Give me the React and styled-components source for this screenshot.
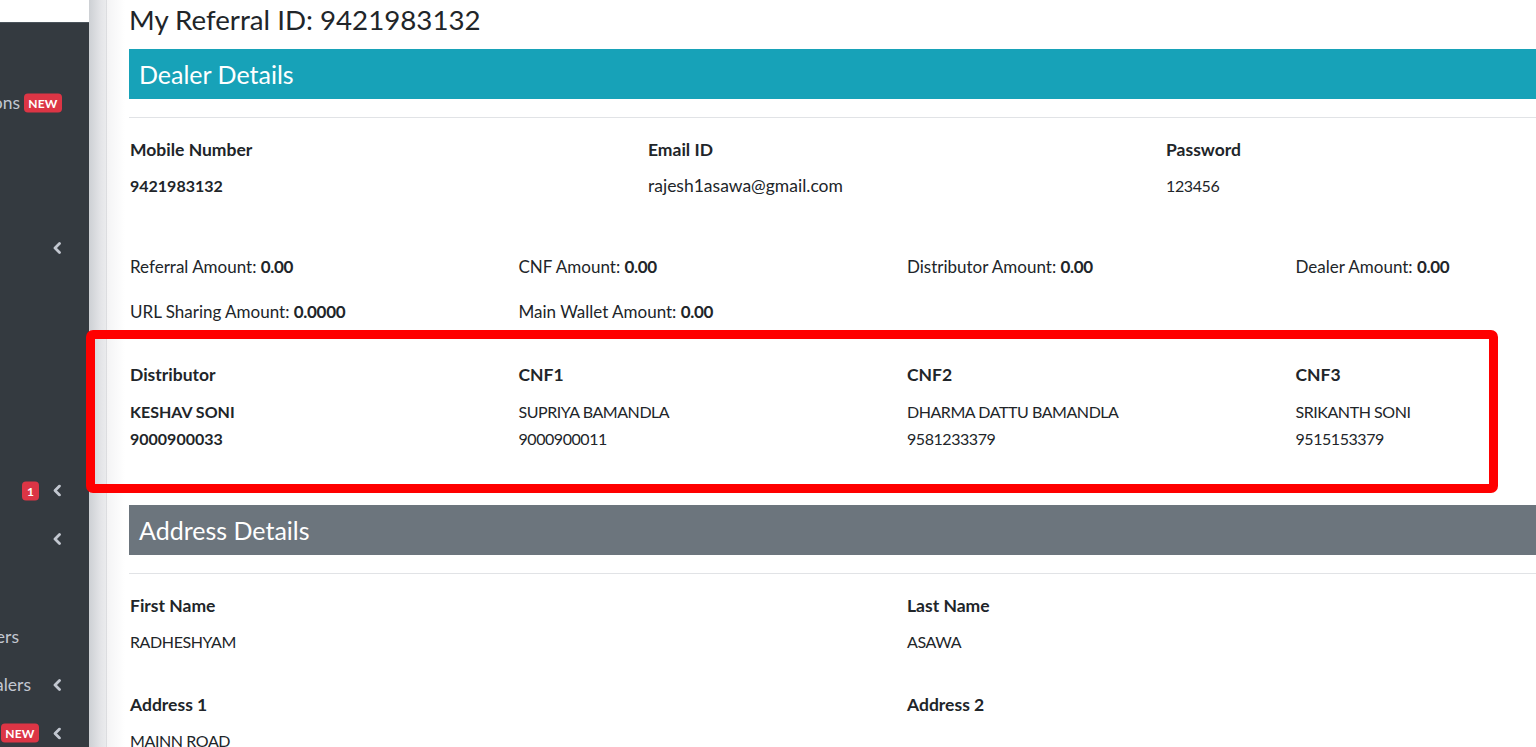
import React from 'react';
import styled, { createGlobalStyle } from 'styled-components';

const GlobalStyle = createGlobalStyle`
  html, body {
    margin: 0;
    padding: 0;
    height: 100%;
    overflow: hidden;
    background: #ffffff;
  }
  body {
    font-family: Lato, "Noto Sans", "Liberation Sans", sans-serif;
    font-size: 17.5px;
    color: #212529;
  }
`;

// the menu is scrolled sideways, so only the tail of a few labels shows
const navItems = [
  { id: 'notifications', label: 'Notifications', reach: 20, badge: 'NEW' },
  { id: 'blank-1' },
  { id: 'blank-2' },
  { id: 'reports', arrow: true },
  { id: 'blank-3' },
  { id: 'blank-4' },
  { id: 'blank-5' },
  { id: 'blank-6' },
  { id: 'tickets', badge: '1', arrow: true },
  { id: 'payouts', arrow: true },
  { id: 'blank-7' },
  { id: 'retailers', label: 'All Retailers', reach: 19 },
  { id: 'dealers', label: 'Manage Dealers', reach: 31, arrow: true },
  { id: 'referral', badge: 'NEW', arrow: true },
];

const distributorInfo = [
  { title: 'Distributor', name: 'KESHAV SONI', phone: '9000900033', strong: true },
  { title: 'CNF1', name: 'SUPRIYA BAMANDLA', phone: '9000900011' },
  { title: 'CNF2', name: 'DHARMA DATTU BAMANDLA', phone: '9581233379' },
  { title: 'CNF3', name: 'SRIKANTH SONI', phone: '9515153379' },
];

const Chevron = () => (
  <svg width="10" height="12" viewBox="0 0 10 12">
    <path d="M7.5 1.5 L3 6 L7.5 10.5" fill="none" stroke="#c2c7d0" strokeWidth="2.8" strokeLinecap="round" strokeLinejoin="round" />
  </svg>
);

function App() {
  return (
    <>
      <GlobalStyle />
      <Layout>
        <Sidebar>
          <Brand />
          <Nav>
            {navItems.map((item) => (
              <NavItem key={item.id}>
                {item.label && <NavText reach={item.reach}>{item.label}</NavText>}
                <NavRight>
                  {item.badge && <Badge wide={item.badge.length > 1}>{item.badge}</Badge>}
                  {item.arrow && <Chevron />}
                </NavRight>
              </NavItem>
            ))}
          </Nav>
        </Sidebar>
        <Gutter />
        <Main>
          <Title>My Referral ID: 9421983132</Title>
          <SectionBar color="#17a2b8">Dealer Details</SectionBar>
          <Divider />

          <Grid cols="518px 518px 518px">
            <Field>
              <Label>Mobile Number</Label>
              <Value bold>9421983132</Value>
            </Field>
            <Field>
              <Label>Email ID</Label>
              <Value plain>rajesh1asawa@gmail.com</Value>
            </Field>
            <Field>
              <Label>Password</Label>
              <Value>123456</Value>
            </Field>
          </Grid>

          <Grid cols="388.5px 388.5px 388.5px 388.5px" top={57} rowGap={21}>
            <Amount>Referral Amount: <b>0.00</b></Amount>
            <Amount>CNF Amount: <b>0.00</b></Amount>
            <Amount>Distributor Amount: <b>0.00</b></Amount>
            <Amount>Dealer Amount: <b>0.00</b></Amount>
            <Amount>URL Sharing Amount: <b>0.0000</b></Amount>
            <Amount>Main Wallet Amount: <b>0.00</b></Amount>
          </Grid>

          <Grid cols="388.5px 388.5px 388.5px 388.5px" top={39}>
            {distributorInfo.map((d) => (
              <Field key={d.title}>
                <Label gap={10.5}>{d.title}</Label>
                <Contact bold={d.strong}>{d.name}</Contact>
                <Contact bold={d.strong}>{d.phone}</Contact>
              </Field>
            ))}
          </Grid>

          <SectionBar color="#6c757d" top={53.5}>Address Details</SectionBar>
          <Divider />

          <Grid cols="777px 777px" rowGap={39}>
            <Field>
              <Label>First Name</Label>
              <Value>RADHESHYAM</Value>
            </Field>
            <Field>
              <Label>Last Name</Label>
              <Value>ASAWA</Value>
            </Field>
            <Field>
              <Label>Address 1</Label>
              <Value>MAINN ROAD</Value>
            </Field>
            <Field>
              <Label>Address 2</Label>
              <Value></Value>
            </Field>
          </Grid>
        </Main>
        <Highlight />
      </Layout>
    </>
  );
}

const Layout = styled.div`
  position: relative;
  display: flex;
  height: 747px;
  width: 1536px;
  overflow: hidden;
`;

const Sidebar = styled.aside`
  flex: 0 0 89px;
  background: #343a40;
  overflow: hidden;
  display: flex;
  flex-direction: column;
`;

const Brand = styled.div`
  height: 22px;
  background: #ffffff;
  border-bottom: 1px solid #4b545c;
  flex: none;
`;

const Nav = styled.nav`
  width: 89px;
  padding-top: 55.5px;
`;

const NavItem = styled.div`
  position: relative;
  height: 48.5px;
  display: flex;
  align-items: center;
  justify-content: flex-end;
  color: #c2c7d0;
  font-size: 17.5px;
  white-space: nowrap;
`;

const NavText = styled.span`
  flex: none;
  margin-right: ${(p) => 89 - p.reach}px;
`;

const NavRight = styled.div`
  position: absolute;
  right: 27px;
  top: 50%;
  transform: translateY(-50%);
  display: flex;
  align-items: center;
  gap: 13px;
`;

const Badge = styled.span`
  display: inline-flex;
  align-items: center;
  justify-content: center;
  height: 19px;
  min-width: ${(p) => (p.wide ? '38px' : '17px')};
  padding: 0 4px;
  box-sizing: border-box;
  border-radius: 4px;
  background: #dc3545;
  color: #ffffff;
  font-size: 12px;
  font-weight: 700;
  letter-spacing: 0.2px;
`;

const Gutter = styled.div`
  flex: 0 0 17px;
  background: linear-gradient(to right, #cdd0d4, #e4e5e8 70%, #eaebed);
  border-right: 1px solid #dcdde0;
`;

const Main = styled.main`
  flex: 1;
  min-width: 0;
  padding-left: 22px;
  background: linear-gradient(to right, #f4f4f5 0, #ffffff 18px);
`;

const Title = styled.h1`
  margin: 0;
  font-size: 27.7px;
  font-weight: 400;
  line-height: 40px;
  color: #212529;
  white-space: nowrap;
`;

const SectionBar = styled.div`
  width: 1554px;
  height: 50px;
  margin-top: ${(p) => (p.top !== undefined ? p.top : 9)}px;
  padding-left: 10px;
  box-sizing: border-box;
  background: ${(p) => p.color};
  color: #ffffff;
  font-size: 25px;
  line-height: 50px;
`;

const Divider = styled.div`
  width: 1554px;
  height: 1px;
  margin-top: 18px;
  background: #e1e3e6;
`;

const Grid = styled.div`
  display: grid;
  grid-template-columns: ${(p) => p.cols};
  row-gap: ${(p) => p.rowGap || 0}px;
  margin-top: ${(p) => (p.top !== undefined ? p.top : 20)}px;
  padding-left: 1px;
`;

const Field = styled.div`
  display: flex;
  flex-direction: column;
`;

const Label = styled.div`
  font-weight: 700;
  line-height: 24px;
  margin-bottom: ${(p) => (p.gap !== undefined ? p.gap : 12)}px;
  white-space: nowrap;
`;

/* capitals and digits run wide in this face, so data values are set tighter */
const Value = styled.div`
  line-height: 24px;
  min-height: 24px;
  font-size: ${(p) => (p.plain ? '17.5px' : '16px')};
  letter-spacing: ${(p) => (p.plain || p.bold ? '0' : '-0.4px')};
  font-weight: ${(p) => (p.bold ? 700 : 400)};
  white-space: nowrap;
`;

const Contact = styled.div`
  line-height: 27px;
  font-size: 16px;
  letter-spacing: ${(p) => (p.bold ? '0' : '-0.45px')};
  font-weight: ${(p) => (p.bold ? 700 : 400)};
  white-space: nowrap;
`;

const Amount = styled.div`
  line-height: 24px;
  font-size: 17px;
  white-space: nowrap;

  b {
    font-weight: 700;
    letter-spacing: -0.3px;
  }
`;

const Highlight = styled.div`
  position: absolute;
  left: 86px;
  top: 330px;
  width: 1412px;
  height: 163px;
  box-sizing: border-box;
  border: 9px solid #ff0000;
  border-radius: 7px;
  pointer-events: none;
`;

export default App;
